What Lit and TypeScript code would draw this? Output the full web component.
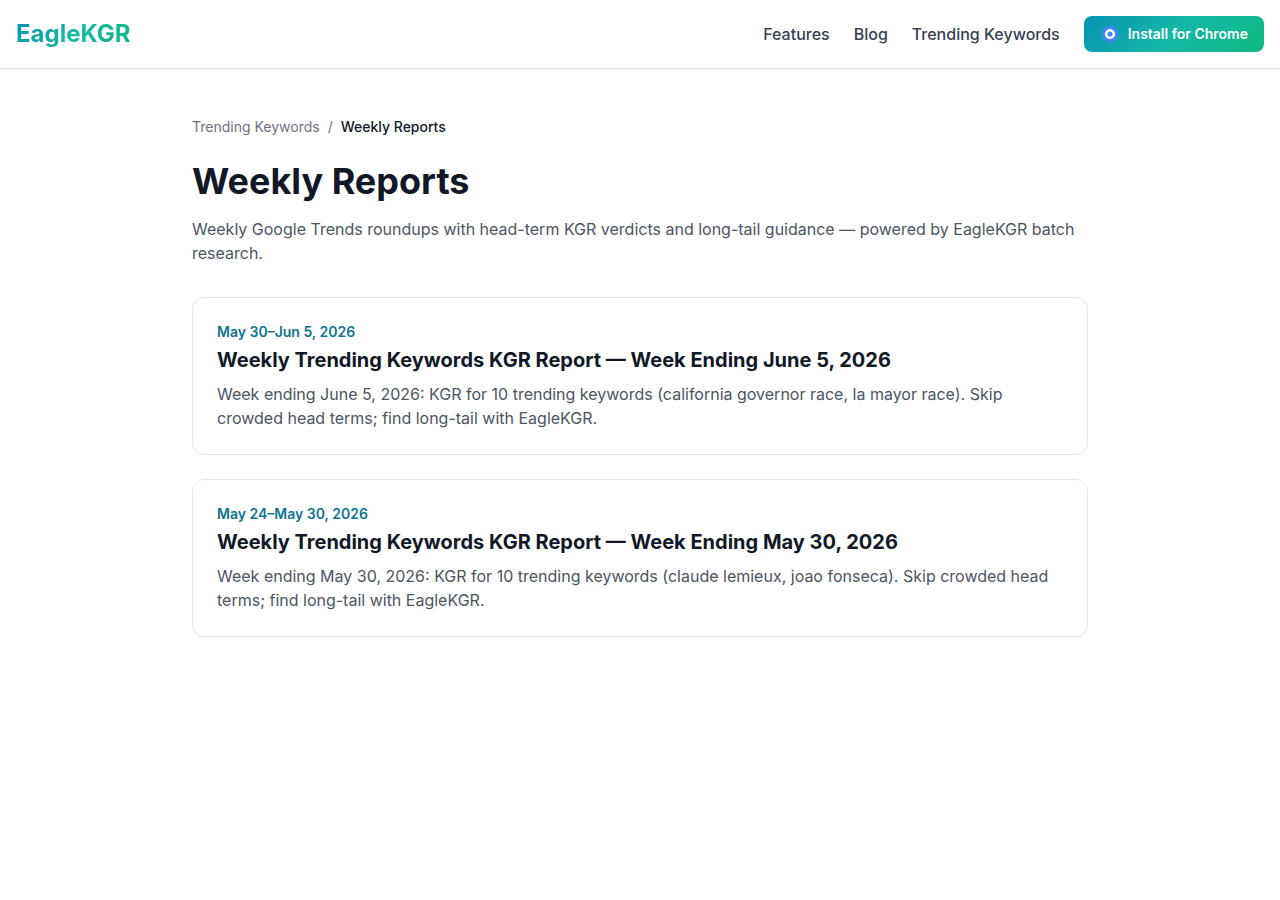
import { LitElement, html, css } from "lit";
import { customElement } from "lit/decorators.js";

const reports = [
  {
    range: "May 30–Jun 5, 2026",
    title: "Weekly Trending Keywords KGR Report — Week Ending June 5, 2026",
    text: "Week ending June 5, 2026: KGR for 10 trending keywords (california governor race, la mayor race). Skip crowded head terms; find long-tail with EagleKGR.",
  },
  {
    range: "May 24–May 30, 2026",
    title: "Weekly Trending Keywords KGR Report — Week Ending May 30, 2026",
    text: "Week ending May 30, 2026: KGR for 10 trending keywords (claude lemieux, joao fonseca). Skip crowded head terms; find long-tail with EagleKGR.",
  },
];

@customElement("app-root")
export class AppRoot extends LitElement {
  static styles = css`
    :host {
      display: block;
      min-height: 100vh;
      background: #fff;
      color: #111827;
      font-family: Inter, sans-serif;
      font-size: 16px;
      line-height: 24px;
      -webkit-font-smoothing: antialiased;
    }
    * { box-sizing: border-box; margin: 0; }
    a { color: inherit; text-decoration: none; }
    header {
      display: flex;
      align-items: center;
      justify-content: space-between;
      height: 69px;
      padding: 0 16px;
      border-bottom: 1px solid #e5e7eb;
      box-shadow: 0 1px 2px rgba(0, 0, 0, 0.05);
    }
    .logo {
      font-size: 24px;
      line-height: 32px;
      font-weight: 700;
      color: transparent;
      background: linear-gradient(135deg, #0891b2 0%, #14b8a6 50%, #10b981 100%);
      -webkit-background-clip: text;
      background-clip: text;
    }
    nav { display: flex; align-items: center; gap: 24px; font-weight: 500; color: #374151; }
    .install {
      display: flex;
      align-items: center;
      gap: 8px;
      height: 36px;
      padding: 0 16px;
      border-radius: 8px;
      color: #fff;
      font-size: 14px;
      line-height: 20px;
      font-weight: 600;
      background: linear-gradient(135deg, #0891b2 0%, #14b8a6 50%, #10b981 100%);
    }
    .install svg { display: block; width: 20px; height: 20px; }
    main { max-width: 896px; margin: 0 auto; padding-top: 48px; }
    .crumbs { display: flex; gap: 8px; font-size: 14px; line-height: 20px; color: #6b7280; margin-bottom: 24px; }
    .current { color: #111827; font-weight: 500; }
    h1 { font-size: 36px; line-height: 40px; font-weight: 700; margin-bottom: 16px; }
    .intro { color: #4b5563; margin-bottom: 32px; }
    .list { display: grid; gap: 24px; }
    .card { display: block; padding: 24px; border: 1px solid #e5e7eb; border-radius: 12px; }
    .range { font-size: 14px; line-height: 20px; font-weight: 600; color: #0e7490; margin-bottom: 4px; }
    h2 { font-size: 20px; line-height: 28px; font-weight: 700; margin-bottom: 8px; }
    .text { color: #4b5563; }
  `;

  render() {
    return html`
      <header>
        <a class="logo">EagleKGR</a>
        <nav>
          <a>Features</a>
          <a>Blog</a>
          <a>Trending Keywords</a>
          <a class="install">
            <svg viewBox="0 0 20 20"><circle cx="10" cy="10" r="8" fill="#4285f4" /><circle cx="10" cy="10" r="3.8" fill="none" stroke="#fff" stroke-width="2.5" /></svg>
            Install for Chrome
          </a>
        </nav>
      </header>
      <main>
        <div class="crumbs"><a>Trending Keywords</a><span>/</span><span class="current">Weekly Reports</span></div>
        <h1>Weekly Reports</h1>
        <p class="intro">Weekly Google Trends roundups with head-term KGR verdicts and long-tail guidance — powered by EagleKGR batch research.</p>
        <div class="list">
          ${reports.map((r) => html`<a class="card">
            <p class="range">${r.range}</p>
            <h2>${r.title}</h2>
            <p class="text">${r.text}</p>
          </a>`)}
        </div>
      </main>
    `;
  }
}
